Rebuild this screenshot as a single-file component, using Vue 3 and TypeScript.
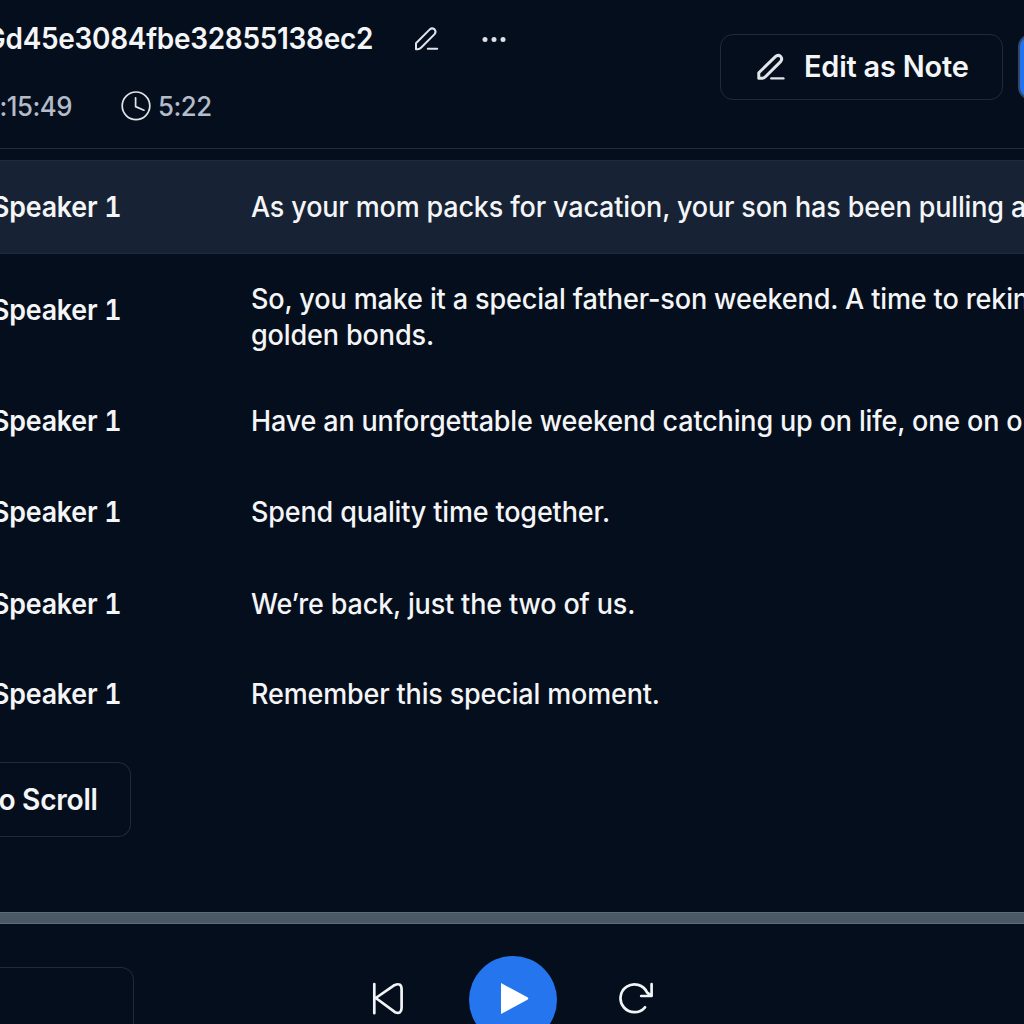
<script setup lang="ts">
interface Line {
  speaker: string
  text: string[]
  height: number
  active?: boolean
}

const lines: Line[] = [
  { speaker: 'Speaker 1', text: ['As your mom packs for vacation, your son has been pulling away.'], height: 94, active: true },
  { speaker: 'Speaker 1', text: ['So, you make it a special father-son weekend. A time to rekindle those', 'golden bonds.'], height: 121 },
  { speaker: 'Speaker 1', text: ['Have an unforgettable weekend catching up on life, one on one.'], height: 92 },
  { speaker: 'Speaker 1', text: ['Spend quality time together.'], height: 91 },
  { speaker: 'Speaker 1', text: ['We’re back, just the two of us.'], height: 93 },
  { speaker: 'Speaker 1', text: ['Remember this special moment.'], height: 87 },
]
</script>

<template>
  <main class="screen">
    <header class="header">
      <div class="info">
        <div class="title-row">
          <h1 class="title"><span>Gd45e3084fbe32855138ec2</span></h1>
          <svg class="pencil" viewBox="0 0 28 28" width="28" height="28">
            <path d="M4 24.2V18.2L17.8 4.4Q20 2.4 22.6 4.4Q24.5 6.6 22.6 9.1L9 22.8Q7.6 24.2 5.6 24.2ZM15.8 23.8H25.2" />
          </svg>
          <svg class="dots" viewBox="0 0 26 8" width="26" height="8">
            <circle cx="4" cy="4.4" r="2.5" /><circle cx="13" cy="4.4" r="2.5" /><circle cx="22" cy="4.4" r="2.5" />
          </svg>
        </div>
        <div class="meta">
          <span class="time"><span>:15:49</span></span>
          <svg class="clock" viewBox="0 0 30 30" width="30" height="30">
            <circle cx="15" cy="14.8" r="13.8" /><path d="M14.6 6.8V15.6L23 19.2" />
          </svg>
          <span class="duration">5:22</span>
        </div>
      </div>
      <div class="actions">
        <button class="edit">
          <svg viewBox="0 0 30 30" width="30" height="30">
            <path d="M2.8 27.2V21.8L19.4 5.6Q22 3.2 24.6 5.4Q26.8 8 24.6 10.6L9.4 25.8Q8 27.2 6 27.2Z" />
            <path d="M15.4 27.4H27.4" class="thin" />
          </svg>
          <span>Edit as Note</span>
        </button>
        <button class="primary" aria-label="Share"></button>
      </div>
    </header>

    <section class="transcript">
      <article
        v-for="(line, i) in lines"
        :key="i"
        class="line"
        :class="{ active: line.active, multi: line.text.length > 1 }"
        :style="{ height: line.height + 'px' }"
      >
        <div class="speaker"><span>{{ line.speaker }}</span></div>
        <div class="text">
          <p v-for="t in line.text" :key="t">{{ t }}</p>
        </div>
      </article>
    </section>

    <div class="scroll-row">
      <button class="auto-scroll"><span>Auto Scroll</span></button>
    </div>
    <div class="progress"></div>

    <footer class="player">
      <div class="speed"></div>
      <div class="controls">
        <svg class="ctl" viewBox="0 0 36 36" width="36" height="36">
          <path d="M4.3 2V31.2M5.8 16L24.4 3.2Q31.6 0 31.6 7.6V26Q31.4 32.6 25 30.2Z" />
        </svg>
        <button class="play" aria-label="Play">
          <svg viewBox="0 0 88 88" width="88" height="88">
            <path d="M32 27L58.4 41.3Q60.2 42.5 58.4 43.7L32 58Z" />
          </svg>
        </button>
        <svg class="ctl" viewBox="0 0 36 36" width="36" height="36">
          <path d="M26 25.3A13.9 13.9 0 1 1 28 10.4L31.6 13.4M32.6 2.2V14H22.2" />
        </svg>
      </div>
    </footer>
  </main>
</template>

<style>
body {
  margin: 0;
  background: #050e1c;
}
</style>

<style scoped>
.screen {
  width: 1024px;
  height: 1024px;
  overflow: hidden;
  display: flex;
  flex-direction: column;
  background: #050e1c;
  color: #f4f5f7;
  font-family: Inter, "Liberation Sans", sans-serif;
}
button {
  font: inherit;
  color: inherit;
  background: transparent;
  padding: 0;
  box-sizing: border-box;
}
svg {
  flex: none;
  fill: none;
  stroke: #e1e5ea;
  stroke-width: 2;
  stroke-linecap: round;
  stroke-linejoin: round;
}
.header {
  flex: none;
  height: 149px;
  box-sizing: border-box;
  border-bottom: 1px solid #1f2c40;
  display: flex;
  justify-content: space-between;
}
.title-row {
  display: flex;
  align-items: center;
  height: 78px;
}
.title {
  margin: 0;
  width: 373px;
  display: flex;
  justify-content: flex-end;
  white-space: nowrap;
  font-size: 29.5px;
  font-weight: 600;
  letter-spacing: -0.3px;
  padding-bottom: 2px;
}
.title span,
.time span,
.speaker span,
.auto-scroll span {
  transform: scaleX(0.955);
  transform-origin: right center;
}
.title span {
  transform: translateX(0.5px) scaleX(0.948);
}
.pencil {
  margin-left: 39px;
}
.dots {
  margin-left: 41px;
}
.dots circle {
  fill: #dce1e7;
  stroke: none;
}
.meta {
  display: flex;
  align-items: center;
  height: 56px;
  font-size: 27px;
  font-weight: 450;
  letter-spacing: -0.5px;
  color: #b3bcc8;
}
.time {
  width: 72px;
  display: flex;
  justify-content: flex-end;
}
.clock {
  margin: 0 7px 0 49px;
  stroke-width: 1.7;
}
.duration {
  transform: scaleX(0.955);
  transform-origin: left center;
}
.actions {
  display: flex;
  gap: 15px;
  padding-top: 34px;
  width: 304px;
}
.edit {
  flex: none;
  width: 283px;
  height: 66px;
  border: 1px solid #1e2a3e;
  border-radius: 13px;
  display: flex;
  align-items: center;
  gap: 18px;
  padding-left: 35px;
  padding-bottom: 2px;
  white-space: nowrap;
  font-size: 29.5px;
  font-weight: 600;
  letter-spacing: -0.2px;
}
.edit span {
  transform: scaleX(0.98);
  transform-origin: left center;
}
.edit svg {
  stroke-width: 3;
}
.edit .thin {
  stroke-width: 2.4;
}
.primary {
  flex: none;
  width: 120px;
  height: 66px;
  border: 2px solid #33486a;
  border-radius: 13px;
  background: #2273ee;
}
.transcript {
  flex: none;
  padding-top: 11px;
}
.line {
  display: flex;
  align-items: center;
  box-sizing: border-box;
  white-space: nowrap;
  font-size: 28px;
  padding-bottom: 1px;
}
.line.active {
  background: #172334;
  border-top: 1px solid #1e2b3d;
  border-bottom: 1px solid #1e2b3d;
  padding-bottom: 0;
}
.speaker {
  flex: none;
  width: 121px;
  display: flex;
  justify-content: flex-end;
  font-weight: 600;
  letter-spacing: -0.2px;
  font-feature-settings: "tnum";
}
.text {
  margin-left: 130px;
  font-weight: 450;
  transform: scaleX(0.963);
  transform-origin: left center;
}
.text p {
  margin: 0;
  line-height: 36px;
  letter-spacing: -0.15px;
}
.multi .speaker {
  padding-bottom: 9px;
}
.multi .text {
  padding-top: 6px;
  transform: scaleX(0.966);
}
.scroll-row {
  flex: none;
  height: 174px;
  box-sizing: border-box;
  padding-top: 24px;
}
.auto-scroll {
  width: 131px;
  height: 75px;
  border: 1px solid #1e2a3e;
  border-left: 0;
  border-radius: 0 13px 13px 0;
  display: flex;
  align-items: center;
  justify-content: flex-end;
  padding-right: 32px;
  padding-bottom: 1px;
  white-space: nowrap;
  font-size: 29.5px;
  font-weight: 600;
  letter-spacing: -0.3px;
  overflow: hidden;
}
.progress {
  flex: none;
  height: 12px;
  box-sizing: border-box;
  background: #4b5865;
  border-top: 1px solid #5e6b79;
  border-bottom: 1px solid #5e6b79;
}
.player {
  flex: none;
  height: 140px;
  display: flex;
}
.speed {
  margin-top: 43px;
  width: 134px;
  height: 97px;
  box-sizing: border-box;
  border: 1px solid #1e2a3e;
  border-left: 0;
  border-radius: 0 13px 0 0;
}
.controls {
  display: flex;
  align-items: center;
  height: 88px;
  margin: 32px 0 0 236px;
  gap: 62px;
}
.ctl {
  stroke: #f2f4f6;
  stroke-width: 2.7;
}
.ctl:first-child {
  margin-right: 1px;
}
.play {
  width: 88px;
  height: 88px;
  border: 0;
  border-radius: 50%;
  background: #2575ef;
}
.play svg {
  display: block;
  fill: #fff;
  stroke: none;
}
</style>
